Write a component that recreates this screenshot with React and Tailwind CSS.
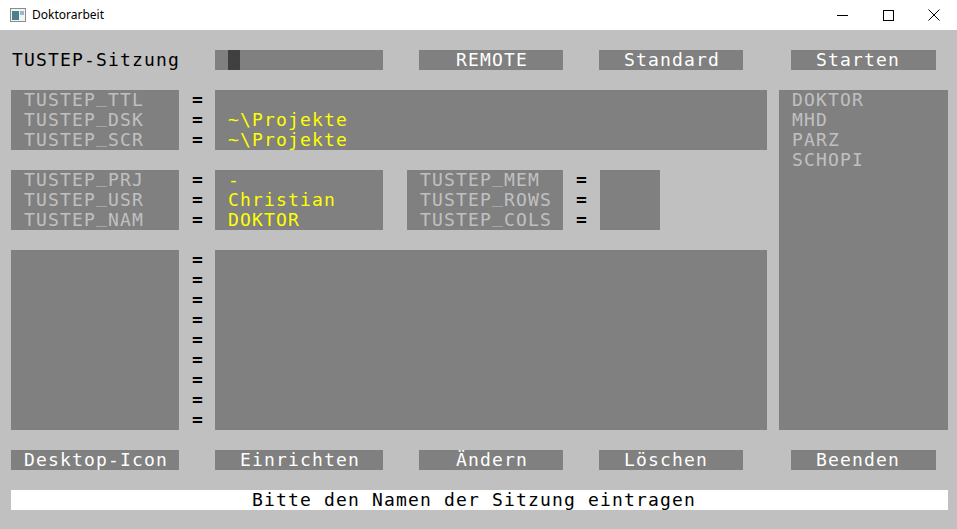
import React from 'react';

const mono = { fontFamily: '"DejaVu Sans Mono", monospace' };

// lift underscores up to the baseline like the original console font
function Line({ text }) {
    const parts = text.split('_');
    return parts.map((p, i) => (
        <React.Fragment key={i}>
            {p}
            {i < parts.length - 1 && <span className="relative -top-[3px]">_</span>}
        </React.Fragment>
    ));
}

// grey panel with text lines
function Panel({ className = '', lines = [], color = 'text-[#c0c0c0]', pad = 'pl-[13px]' }) {
    return (
        <div className={`bg-[#808080] ${pad} ${className}`}>
            {lines.map((l, i) => (
                <div key={i} className={`h-5 leading-5 whitespace-pre ${color}`}><Line text={l} /></div>
            ))}
        </div>
    );
}

function Eq({ count }) {
    return (
        <div className="ml-[13px] mr-[11px] w-3 text-black font-bold">
            {Array.from({ length: count }).map((_, i) => (
                <div key={i} className="h-5 leading-5">=</div>
            ))}
        </div>
    );
}

function Btn({ label, className = '' }) {
    return (
        <div className={`h-5 leading-5 bg-[#808080] text-white whitespace-pre ${className}`}>{label}</div>
    );
}

function TitleBar() {
    return (
        <div className="h-[30px] bg-white flex items-center" style={{ fontFamily: '"Noto Sans", sans-serif' }}>
            <svg className="ml-[10px]" width="16" height="14" viewBox="0 0 16 14">
                <rect x="0.5" y="0.5" width="15" height="13" fill="#f4f4f4" stroke="#8a8a8a" />
                <rect x="2" y="3" width="7" height="9" fill="#4a7f8c" />
                <rect x="10" y="3" width="4" height="4" fill="#9ab8c4" />
            </svg>
            <span className="ml-[6px] text-[12px] text-black">Doktorarbeit</span>
            <div className="ml-auto flex items-center h-full">
                <div className="w-[46px] h-full flex items-center justify-center">
                    <div className="w-[11px] h-px bg-black" />
                </div>
                <div className="w-[46px] h-full flex items-center justify-center">
                    <div className="w-[11px] h-[11px] border border-black" />
                </div>
                <div className="w-[46px] h-full flex items-center justify-center">
                    <svg width="12" height="12" viewBox="0 0 12 12">
                        <path d="M0.5 0.5 L11.5 11.5 M11.5 0.5 L0.5 11.5" stroke="#000" strokeWidth="1" />
                    </svg>
                </div>
            </div>
        </div>
    );
}

export default function App() {
    return (
        <div className="w-[957px] h-[529px] bg-[#c0c0c0] overflow-hidden">
            <TitleBar />
            <div className="pl-[11px] text-[18px] tracking-[1.16px]" style={mono}>
                <div className="h-5" />

                {/* top row */}
                <div className="flex h-5 leading-5">
                    <div className="w-[204px] pl-px text-black">TUSTEP-Sitzung</div>
                    <div className="w-[168px] bg-[#808080] pl-[13px]">
                        <div className="w-3 h-5 bg-[#404040]" />
                    </div>
                    <Btn label="REMOTE" className="ml-[36px] w-[144px] pl-[37px]" />
                    <Btn label="Standard" className="ml-[36px] w-[144px] pl-[25px]" />
                    <Btn label="Starten" className="ml-[48px] w-[145px] pl-[25px]" />
                </div>

                <div className="h-5" />

                <div className="flex">
                    <div className="w-[756px]">
                        {/* directories */}
                        <div className="flex">
                            <Panel className="w-[168px]" lines={['TUSTEP_TTL', 'TUSTEP_DSK', 'TUSTEP_SCR']} />
                            <Eq count={3} />
                            <Panel className="w-[552px]" color="text-[#ffff00]" lines={['', '~\\Projekte', '~\\Projekte']} />
                        </div>

                        <div className="h-5" />

                        {/* project / user */}
                        <div className="flex">
                            <Panel className="w-[168px]" lines={['TUSTEP_PRJ', 'TUSTEP_USR', 'TUSTEP_NAM']} />
                            <Eq count={3} />
                            <Panel className="w-[168px]" color="text-[#ffff00]" lines={['-', 'Christian', 'DOKTOR']} />
                            <Panel className="ml-[24px] w-[156px]" lines={['TUSTEP_MEM', 'TUSTEP_ROWS', 'TUSTEP_COLS']} />
                            <Eq count={3} />
                            <div className="w-[60px] ml-px bg-[#808080]" />
                        </div>

                        <div className="h-5" />

                        {/* free variables */}
                        <div className="flex">
                            <div className="w-[168px] h-[180px] bg-[#808080]" />
                            <Eq count={9} />
                            <div className="w-[552px] h-[180px] bg-[#808080]" />
                        </div>
                    </div>

                    {/* session list */}
                    <Panel className="ml-[12px] w-[169px] h-[340px]" lines={['DOKTOR', 'MHD', 'PARZ', 'SCHOPI']} />
                </div>

                <div className="h-5" />

                {/* bottom buttons */}
                <div className="flex">
                    <Btn label="Desktop-Icon" className="w-[168px] pl-[13px]" />
                    <Btn label="Einrichten" className="ml-[36px] w-[168px] pl-[25px]" />
                    <Btn label="Ändern" className="ml-[36px] w-[144px] pl-[37px]" />
                    <Btn label="Löschen" className="ml-[36px] w-[144px] pl-[25px]" />
                    <Btn label="Beenden" className="ml-[48px] w-[145px] pl-[25px]" />
                </div>

                <div className="h-5" />

                <div className="w-[937px] h-5 leading-5 bg-white text-black pl-[241px] whitespace-pre">
                    Bitte den Namen der Sitzung eintragen
                </div>
            </div>
        </div>
    );
}
